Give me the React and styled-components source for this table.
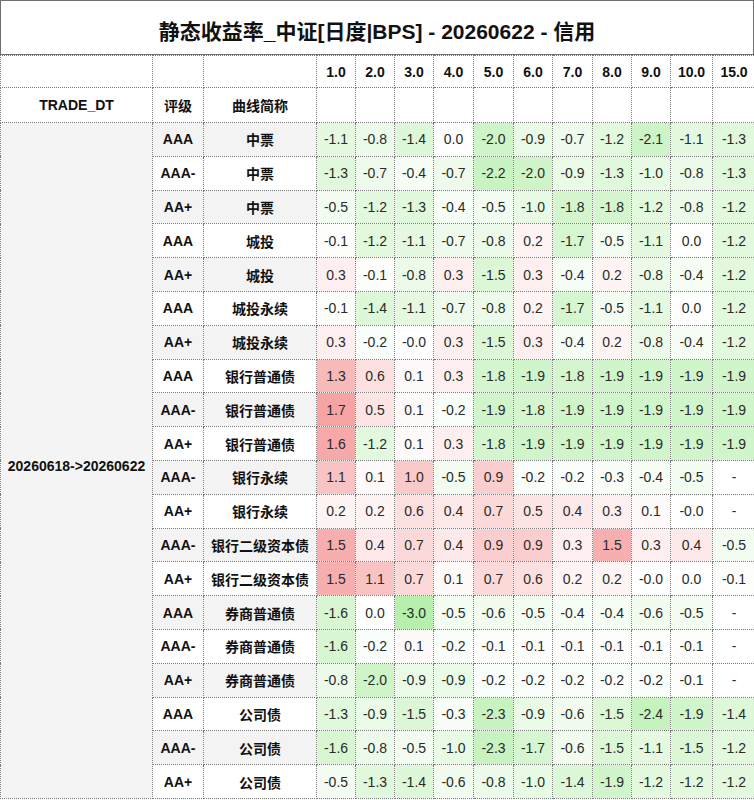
import React from "react";
import styled, { createGlobalStyle } from "styled-components";

const GlobalStyle = createGlobalStyle`
  html, body {
    margin: 0;
    padding: 0;
    background: #fff;
  }
  body {
    font-family: "Liberation Sans", "Noto Sans CJK SC", Arial, sans-serif;
    color: #111;
  }
`;

const TENORS = ["1.0", "2.0", "3.0", "4.0", "5.0", "6.0", "7.0", "8.0", "9.0", "10.0", "15.0"];
const COL_WIDTHS = [152, 51, 113, 39, 39, 39, 40, 40, 39, 40, 39, 39, 42, 43];

const ROWS = [
  ["AAA", "中票", "-1.1 -0.8 -1.4 0.0 -2.0 -0.9 -0.7 -1.2 -2.1 -1.1 -1.3"],
  ["AAA-", "中票", "-1.3 -0.7 -0.4 -0.7 -2.2 -2.0 -0.9 -1.3 -1.0 -0.8 -1.3"],
  ["AA+", "中票", "-0.5 -1.2 -1.3 -0.4 -0.5 -1.0 -1.8 -1.8 -1.2 -0.8 -1.2"],
  ["AAA", "城投", "-0.1 -1.2 -1.1 -0.7 -0.8 0.2 -1.7 -0.5 -1.1 0.0 -1.2"],
  ["AA+", "城投", "0.3 -0.1 -0.8 0.3 -1.5 0.3 -0.4 0.2 -0.8 -0.4 -1.2"],
  ["AAA", "城投永续", "-0.1 -1.4 -1.1 -0.7 -0.8 0.2 -1.7 -0.5 -1.1 0.0 -1.2"],
  ["AA+", "城投永续", "0.3 -0.2 -0.0 0.3 -1.5 0.3 -0.4 0.2 -0.8 -0.4 -1.2"],
  ["AAA", "银行普通债", "1.3 0.6 0.1 0.3 -1.8 -1.9 -1.8 -1.9 -1.9 -1.9 -1.9"],
  ["AAA-", "银行普通债", "1.7 0.5 0.1 -0.2 -1.9 -1.8 -1.9 -1.9 -1.9 -1.9 -1.9"],
  ["AA+", "银行普通债", "1.6 -1.2 0.1 0.3 -1.8 -1.9 -1.9 -1.9 -1.9 -1.9 -1.9"],
  ["AAA-", "银行永续", "1.1 0.1 1.0 -0.5 0.9 -0.2 -0.2 -0.3 -0.4 -0.5 -"],
  ["AA+", "银行永续", "0.2 0.2 0.6 0.4 0.7 0.5 0.4 0.3 0.1 -0.0 -"],
  ["AAA-", "银行二级资本债", "1.5 0.4 0.7 0.4 0.9 0.9 0.3 1.5 0.3 0.4 -0.5"],
  ["AA+", "银行二级资本债", "1.5 1.1 0.7 0.1 0.7 0.6 0.2 0.2 -0.0 0.0 -0.1"],
  ["AAA", "券商普通债", "-1.6 0.0 -3.0 -0.5 -0.6 -0.5 -0.4 -0.4 -0.6 -0.5 -"],
  ["AAA-", "券商普通债", "-1.6 -0.2 0.1 -0.2 -0.1 -0.1 -0.1 -0.1 -0.1 -0.1 -"],
  ["AA+", "券商普通债", "-0.8 -2.0 -0.9 -0.9 -0.2 -0.2 -0.2 -0.2 -0.2 -0.1 -"],
  ["AAA", "公司债", "-1.3 -0.9 -1.5 -0.3 -2.3 -0.9 -0.6 -1.5 -2.4 -1.9 -1.4"],
  ["AAA-", "公司债", "-1.6 -0.8 -0.5 -1.0 -2.3 -1.7 -0.6 -1.5 -1.1 -1.5 -1.2"],
  ["AA+", "公司债", "-0.5 -1.3 -1.4 -0.6 -0.8 -1.0 -1.4 -1.9 -1.2 -1.2 -1.2"],
].map(([rating, curve, vals]) => ({ rating, curve, values: vals.split(" ") }));

// green for falling yields, red for rising ones, white at zero
function heat(text) {
  const v = parseFloat(text);
  if (isNaN(v) || v === 0) return "#ffffff";
  if (v < 0) {
    const t = Math.min(1, -v / 3);
    return `rgb(${Math.round(255 - 72 * t)}, ${Math.round(255 - 16 * t)}, ${Math.round(255 - 82 * t)})`;
  }
  const t = Math.min(1, v / 1.7);
  return `rgb(${Math.round(255 - 9 * t)}, ${Math.round(255 - 92 * t)}, ${Math.round(255 - 92 * t)})`;
}

const Page = styled.div`
  width: 754px;
`;

const TitleBar = styled.div`
  height: 55px;
  box-sizing: border-box;
  border: 1px solid #6f6f6f;
  display: flex;
  align-items: center;
  justify-content: center;
  padding-top: 4px;
  font-size: 21px;
  font-weight: 700;
  color: #111;
`;

const Grid = styled.table`
  width: 754px;
  table-layout: fixed;
  border-collapse: collapse;
  font-family: "Liberation Sans", "Noto Sans CJK SC", Arial, sans-serif;

  td {
    border: 1px dotted #7a7a7a;
    padding: 0;
    text-align: center;
    vertical-align: middle;
    white-space: nowrap;
    overflow: hidden;
  }
`;

const HeadRow = styled.tr`
  height: ${(p) => p.$h}px;
`;

const BodyRow = styled.tr`
  height: 33.8px;
`;

const HeadCell = styled.td`
  font-size: 14px;
  font-weight: 700;
  color: #111;
  background: #fff;
`;

const DateCell = styled.td`
  font-size: 14px;
  font-weight: 700;
  color: #111;
  background: #f4f4f4;
  && {
    padding-top: 12px;
  }
`;

const LabelCell = styled.td`
  font-size: 14px;
  font-weight: 700;
  color: #111;
  background: ${(p) => (p.$shade ? "#f3f3f3" : "#ffffff")};
`;

const ValueCell = styled.td`
  font-size: 14px;
  color: #2a2a2a;
  background: ${(p) => heat(p.$v)};
`;

export default function App() {
  return (
    <Page>
      <GlobalStyle />
      <TitleBar>静态收益率_中证[日度|BPS] - 20260622 - 信用</TitleBar>
      <Grid>
        <colgroup>
          {COL_WIDTHS.map((w, i) => (
            <col key={i} style={{ width: w }} />
          ))}
        </colgroup>
        <tbody>
          <HeadRow $h={32}>
            <HeadCell />
            <HeadCell />
            <HeadCell />
            {TENORS.map((t) => (
              <HeadCell key={t}>{t}</HeadCell>
            ))}
          </HeadRow>
          <HeadRow $h={35}>
            <HeadCell>TRADE_DT</HeadCell>
            <HeadCell>评级</HeadCell>
            <HeadCell>曲线简称</HeadCell>
            {TENORS.map((t) => (
              <HeadCell key={t} />
            ))}
          </HeadRow>
          {ROWS.map((row, i) => (
            <BodyRow key={i}>
              {i === 0 && <DateCell rowSpan={ROWS.length}>20260618-&gt;20260622</DateCell>}
              <LabelCell $shade={i % 2 === 0}>{row.rating}</LabelCell>
              <LabelCell $shade={i % 2 === 0}>{row.curve}</LabelCell>
              {row.values.map((v, j) => (
                <ValueCell key={j} $v={v}>
                  {v}
                </ValueCell>
              ))}
            </BodyRow>
          ))}
        </tbody>
      </Grid>
    </Page>
  );
}
